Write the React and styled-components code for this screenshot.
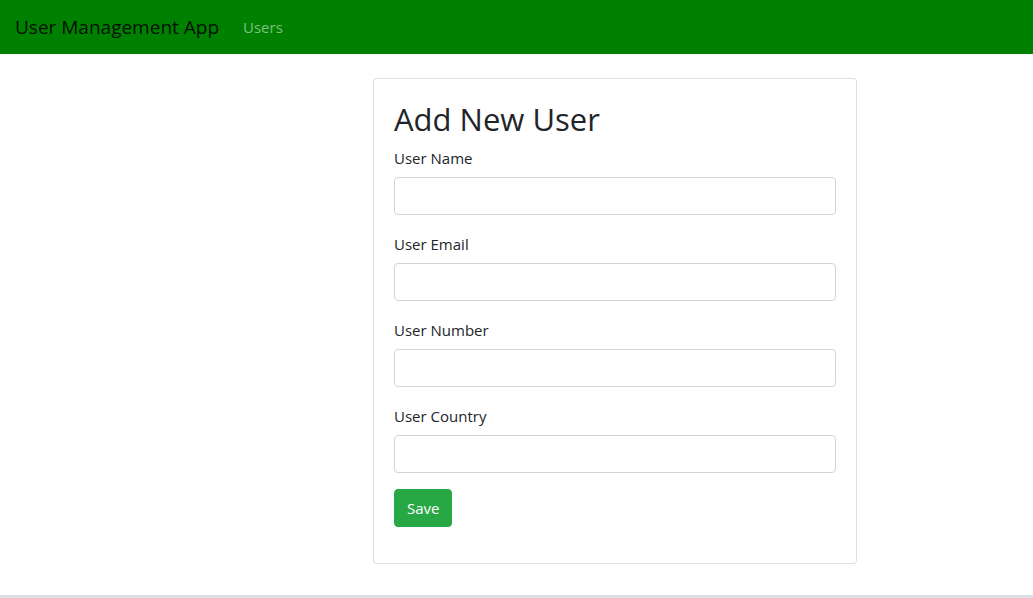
import styled, { createGlobalStyle } from "styled-components";

const GlobalStyle = createGlobalStyle`
  html, body {
    margin: 0;
    padding: 0;
    height: 100%;
  }
  body {
    font-family: "Open Sans", "Liberation Sans", sans-serif;
    font-size: 15px;
    line-height: 1.5;
    color: #212529;
    background: #fff;
  }
  * {
    box-sizing: border-box;
  }
`;

const Page = styled.div`
  display: flex;
  flex-direction: column;
  height: 598px;
  border-bottom: 3px solid #dadfe8;
`;

const Nav = styled.nav`
  display: flex;
  align-items: center;
  height: 54px;
  padding: 0 16px 0 15px;
  background: #008000;
`;

const Brand = styled.a`
  font-size: 19px;
  color: rgba(0, 0, 0, 0.9);
  margin-right: 16px;
  text-decoration: none;
  cursor: pointer;
`;

const NavLink = styled.a`
  padding: 0 8px;
  font-size: 15px;
  color: rgba(255, 255, 255, 0.5);
  text-decoration: none;
  cursor: pointer;

  &:hover {
    color: rgba(255, 255, 255, 0.75);
  }
`;

const Main = styled.main`
  flex: 1;
  padding: 24px 0 0 373px;
`;

const Card = styled.div`
  width: 484px;
  border: 1px solid rgba(0, 0, 0, 0.125);
  border-radius: 4px;
  padding: 20px;
  background: #fff;
`;

const Title = styled.h2`
  margin: 0 0 7px;
  padding-top: 1px;
  font-size: 31px;
  font-weight: 400;
  line-height: 38px;
`;

const FormGroup = styled.div`
  margin-bottom: 16px;
`;

const Label = styled.label`
  display: block;
  margin-bottom: 7px;
  padding-top: 1px;
  line-height: 24px;
`;

const Input = styled.input`
  display: block;
  width: 100%;
  height: 38px;
  padding: 6px 12px;
  font: inherit;
  border: 1px solid #ced4da;
  border-radius: 4px;
  outline: none;

  &:focus {
    border-color: #80bdff;
  }
`;

const Button = styled.button`
  height: 38px;
  padding: 1px 12px 0;
  font: inherit;
  color: #fff;
  background: #28a745;
  border: 1px solid #28a745;
  border-radius: 4px;
  cursor: pointer;
`;

const fields = ["User Name", "User Email", "User Number", "User Country"];

const App = () => {
  return (
    <>
      <GlobalStyle />
      <Page>
        <Nav>
          <Brand>User Management App</Brand>
          <NavLink>Users</NavLink>
        </Nav>
        <Main>
          <Card>
            <Title>Add New User</Title>
            {fields.map((f) => (
              <FormGroup key={f}>
                <Label>{f}</Label>
                <Input type="text" />
              </FormGroup>
            ))}
            <FormGroup>
              <Button>Save</Button>
            </FormGroup>
          </Card>
        </Main>
      </Page>
    </>
  );
};

export default App;
